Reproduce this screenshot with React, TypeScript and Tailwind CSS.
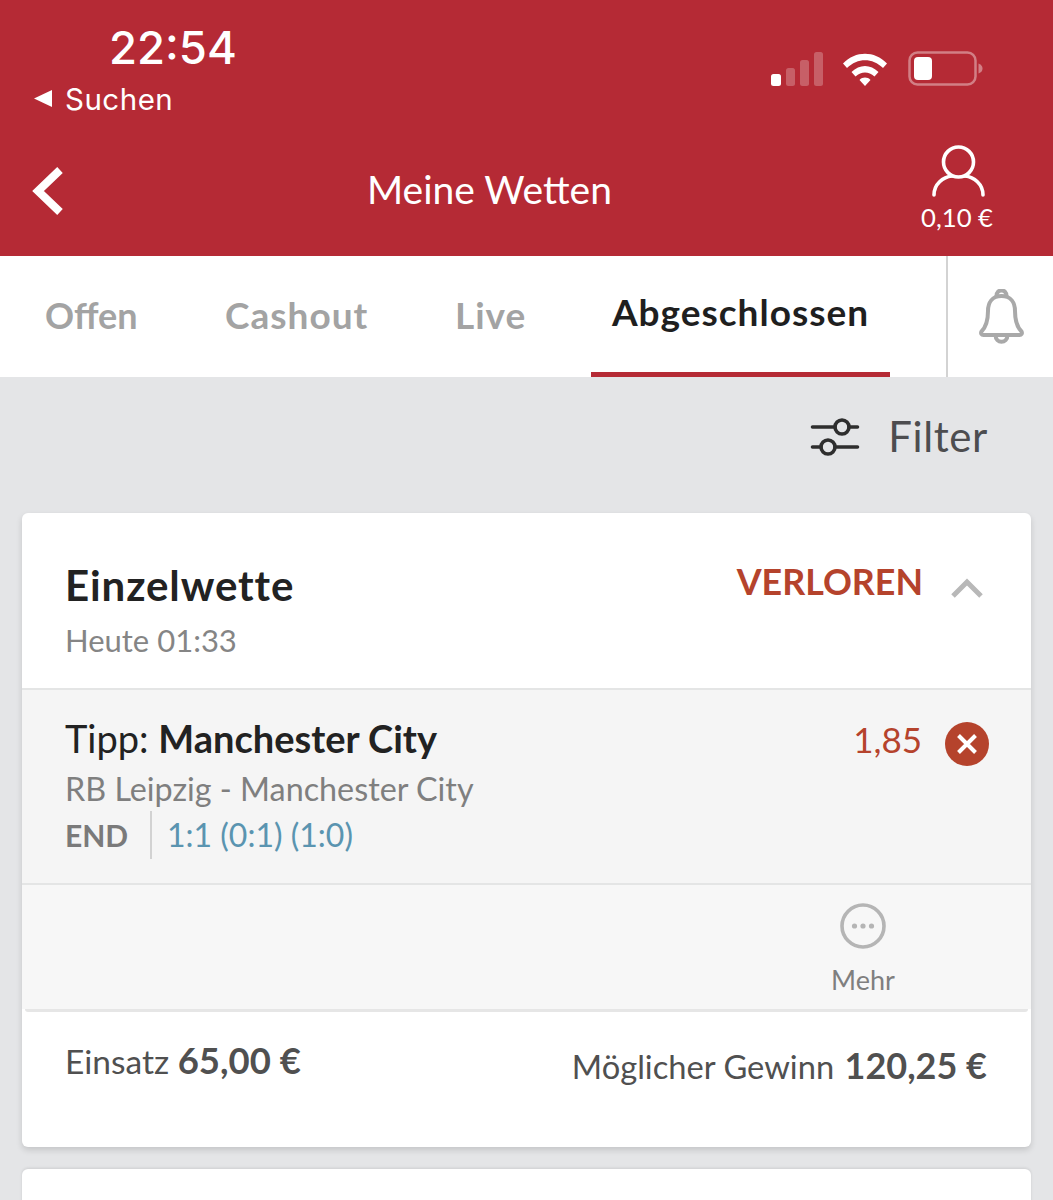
const font = { fontFamily: '"Lato", "Noto Sans", sans-serif' };

function Signal() {
  return (
    <svg width="54" height="36" viewBox="0 0 54 36" className="block">
      <rect x="0" y="23" width="10" height="12" rx="2.5" fill="#fff" />
      <rect x="15" y="17" width="9" height="18" rx="2.5" fill="#fff" fillOpacity="0.25" />
      <rect x="29" y="9" width="9" height="26" rx="2.5" fill="#fff" fillOpacity="0.25" />
      <rect x="43" y="1" width="9" height="34" rx="2.5" fill="#fff" fillOpacity="0.25" />
    </svg>
  );
}

function Wifi() {
  return (
    <svg width="46" height="34" viewBox="0 0 46 34" className="block">
      <path d="M1 11.5C13.5 -1.5 32.5 -1.5 45 11.5L41 16C30.5 5.5 15.5 5.5 5 16Z" fill="#fff" />
      <path d="M9.5 20C17.5 12 28.5 12 36.5 20L32.5 24.5C26.5 19 19.5 19 13.5 24.5Z" fill="#fff" />
      <path d="M17.5 28C20.5 24.8 25.5 24.8 28.5 28L23 34Z" fill="#fff" />
    </svg>
  );
}

function Battery() {
  return (
    <svg width="76" height="36" viewBox="0 0 76 36" className="block">
      <rect x="1.5" y="1.5" width="66" height="32" rx="8" fill="none" stroke="#fff" strokeOpacity="0.4" strokeWidth="2.5" />
      <rect x="6" y="6" width="18" height="23" rx="4" fill="#fff" />
      <path d="M70.5 12.5C73.5 13.5 74.5 15.5 74.5 17.5C74.5 19.5 73.5 21.5 70.5 22.5Z" fill="#fff" fillOpacity="0.4" />
    </svg>
  );
}

export default function App() {
  return (
    <div className="h-[1200px] w-[1053px] overflow-hidden bg-[#e4e5e7]" style={font}>
      <header className="h-[256px] bg-[#b52a35] text-white">
        <div className="flex h-[128px] items-start justify-between pl-[33px] pr-[69px]">
          <div className="pt-[23px]">
            <div className="ml-[76px] text-[45.5px] leading-[50px] font-medium" style={{ fontFamily: 'Inter, sans-serif' }}>22:54</div>
            <div className="mt-[7px] flex items-center gap-[12px]">
              <svg width="20" height="20" viewBox="0 0 20 20" className="block">
                <path d="M19 1V18L1 9.5Z" fill="#fff" />
              </svg>
              <span className="text-[29.5px] leading-[38px] tracking-[0.5px]" style={{ fontFamily: 'Inter, sans-serif' }}>Suchen</span>
            </div>
          </div>
          <div className="mt-[51px] flex items-center">
            <Signal />
            <div className="ml-[17px]"><Wifi /></div>
            <div className="ml-[20px]"><Battery /></div>
          </div>
        </div>
        <div className="flex h-[128px] items-start pl-[31px]">
          <svg width="34" height="50" viewBox="0 0 34 50" className="mt-[38px] block">
            <path d="M29 4L7 25L29 46" fill="none" stroke="#fff" strokeWidth="8" />
          </svg>
          <div className="mt-[36px] ml-[302px] w-[244px] text-center text-[39px] leading-[50px] whitespace-nowrap">Meine Wetten</div>
          <div className="mt-[17px] ml-[310px] flex w-[76px] flex-col items-center">
            <svg width="54" height="52" viewBox="0 0 54 52" className="block">
              <circle cx="26.5" cy="17" r="15" fill="none" stroke="#fff" strokeWidth="3.6" />
              <path d="M2 50C2 39 11 32 20 31M51 50C51 39 42 32 33 31" fill="none" stroke="#fff" strokeWidth="3.6" strokeLinecap="round" />
            </svg>
            <div className="mt-[4px] pr-[4px] text-[25.7px] leading-[32px] whitespace-nowrap">0,10 €</div>
          </div>
        </div>
      </header>

      <nav className="flex h-[121px] bg-white">
        <div className="flex h-full w-[946px] items-start font-bold text-[#a3a3a3]">
          <div className="mt-[35px] ml-[45px] w-[91px] text-[36px] leading-[48px]">Offen</div>
          <div className="mt-[35px] ml-[89px] w-[143px] text-[37px] leading-[48px] tracking-[1px]">Cashout</div>
          <div className="mt-[35px] ml-[87px] w-[69px] text-[37px] leading-[48px] tracking-[1px]">Live</div>
          <div className="ml-[67px] flex h-full w-[299px] flex-col items-center border-b-[5px] border-[#b52a35] pt-[32px] text-[37px] leading-[48px] tracking-[1px] text-[#1f1f1f]">Abgeschlossen</div>
        </div>
        <div className="flex flex-1 items-center border-l-[2px] border-[#d3d3d3] pl-[31px]">
          <svg width="46" height="56" viewBox="0 0 46 56" className="block">
            <path d="M22.5 7C13 7 9 14 9 22C9 33 7 38 2.5 42.5C1.5 44.5 2.5 46 4.5 46H40.5C42.5 46 43.5 44.5 42.5 42.5C38 38 36 33 36 22C36 14 32 7 22.5 7Z" fill="none" stroke="#a9a9a9" strokeWidth="4" strokeLinejoin="round" />
            <path d="M17.5 7C17.5 -0.5 27.5 -0.5 27.5 7" fill="none" stroke="#a9a9a9" strokeWidth="4" />
            <path d="M16.5 46C16.5 55 28.5 55 28.5 46" fill="none" stroke="#a9a9a9" strokeWidth="4" />
          </svg>
        </div>
      </nav>

      <div className="flex h-[136px] items-start justify-end pt-[34px] pr-[65px]">
        <svg width="50" height="40" viewBox="0 0 50 40" className="mt-[6px] block">
          <path d="M2.5 10H25M39 10H47.5M2.5 30H11M25 30H47.5" fill="none" stroke="#2e2e2e" strokeWidth="3.6" strokeLinecap="round" />
          <circle cx="32" cy="10" r="7" fill="none" stroke="#2e2e2e" strokeWidth="3.6" />
          <circle cx="18" cy="30" r="7" fill="none" stroke="#2e2e2e" strokeWidth="3.6" />
        </svg>
        <div className="ml-[28px] text-[42px] leading-[50px] tracking-[0.6px] text-[#4d4d4f]">Filter</div>
      </div>

      <main className="px-[22px]">
        <section className="h-[634px] overflow-hidden rounded-[6px] bg-white shadow-[0_3px_6px_rgba(0,0,0,0.14)]">
          <div className="flex h-[175px] items-start justify-between pt-[49px] pr-[48px] pl-[43px]">
            <div>
              <div className="text-[42px] leading-[46px] font-bold tracking-[0.9px] text-[#222]">Einzelwette</div>
              <div className="mt-[14px] text-[31px] leading-[36px] text-[#858585]">Heute 01:33</div>
            </div>
            <div className="flex items-center gap-[28px]">
              <div className="text-[35.8px] leading-[40px] font-bold text-[#b5432c]">VERLOREN</div>
              <svg width="32" height="20" viewBox="0 0 32 20" className="mt-[12px] block">
                <path d="M2 18L16 4L30 18" fill="none" stroke="#b8b8b8" strokeWidth="5" />
              </svg>
            </div>
          </div>

          <div className="flex h-[197px] items-start justify-between border-y-[2px] border-[#e4e5e5] bg-[#f5f5f5] pt-[27px] pr-[42px] pl-[43px]">
            <div>
              <div className="text-[38px] leading-[42px] text-[#222]">
                Tipp: <span className="font-bold">Manchester City</span>
              </div>
              <div className="mt-[11px] text-[32.3px] leading-[38px] text-[#7f7f7f]">RB Leipzig - Manchester City</div>
              <div className="mt-[3px] flex items-center">
                <div className="w-[87px] border-r-[2px] border-[#d2d2d2] text-[30px] leading-[48px] font-bold text-[#7a7a7a]">END</div>
                <div className="pl-[15px] text-[32px] leading-[48px] text-[#5a94b0]">1:1 (0:1) (1:0)</div>
              </div>
            </div>
            <div className="flex items-start gap-[23px]">
              <div className="mt-[1px] text-[35px] leading-[42px] text-[#b5432c]">1,85</div>
              <svg width="44" height="44" viewBox="0 0 44 44" className="mt-[5px] block">
                <circle cx="22" cy="22" r="22" fill="#b5432c" />
                <path d="M13.5 13.5L30.5 30.5M30.5 13.5L13.5 30.5" stroke="#fff" strokeWidth="4" />
              </svg>
            </div>
          </div>

          <div className="flex h-[124px] flex-col items-end bg-[#f7f7f7] pt-[18px] pr-[136px]">
            <div className="flex w-[64px] flex-col items-center">
              <svg width="46" height="46" viewBox="0 0 46 46" className="block">
                <circle cx="23" cy="23" r="21" fill="none" stroke="#b5b5b5" strokeWidth="3.6" />
                <circle cx="14.5" cy="23" r="2.6" fill="#b5b5b5" />
                <circle cx="23" cy="23" r="2.6" fill="#b5b5b5" />
                <circle cx="31.5" cy="23" r="2.6" fill="#b5b5b5" />
              </svg>
              <div className="mt-[13px] text-[27px] leading-[36px] text-[#7f7f7f]">Mehr</div>
            </div>
          </div>
          <div className="mx-[3px] h-[3px] rounded-b-[3px] bg-[#e6e6e6]" />

          <div className="flex items-start justify-between pt-[26px] pr-[44px] pl-[43px] text-[#505050]">
            <div className="text-[33.5px] leading-[44px] whitespace-nowrap">
              Einsatz <span className="text-[36.5px] font-bold">65,00 €</span>
            </div>
            <div className="mt-[5px] text-[32.7px] leading-[44px] whitespace-nowrap">
              Möglicher Gewinn <span className="ml-[2px] text-[36px] font-bold">120,25 €</span>
            </div>
          </div>
        </section>

        <section className="mt-[22px] h-[200px] rounded-[6px] bg-white shadow-[0_-1px_3px_rgba(0,0,0,0.1)]" />
      </main>
    </div>
  );
}
